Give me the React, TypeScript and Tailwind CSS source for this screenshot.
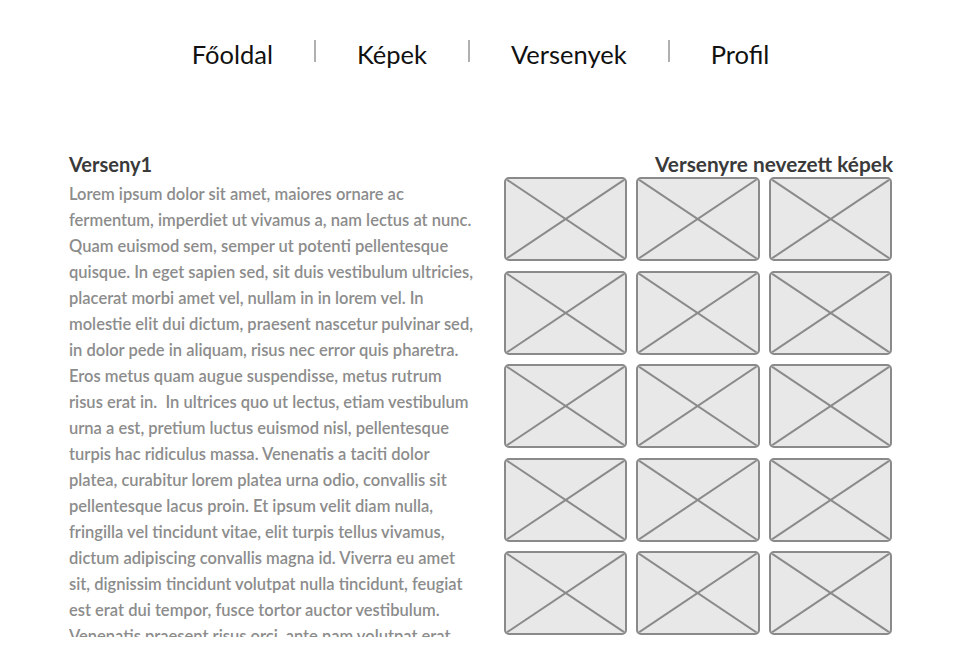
const navItems = ["Főoldal", "Képek", "Versenyek", "Profil"];

const lines = [
  "Lorem ipsum dolor sit amet, maiores ornare ac",
  "fermentum, imperdiet ut vivamus a, nam lectus at nunc.",
  "Quam euismod sem, semper ut potenti pellentesque",
  "quisque. In eget sapien sed, sit duis vestibulum ultricies,",
  "placerat morbi amet vel, nullam in in lorem vel. In",
  "molestie elit dui dictum, praesent nascetur pulvinar sed,",
  "in dolor pede in aliquam, risus nec error quis pharetra.",
  "Eros metus quam augue suspendisse, metus rutrum",
  "risus erat in.\u00a0 In ultrices quo ut lectus, etiam vestibulum",
  "urna a est, pretium luctus euismod nisl, pellentesque",
  "turpis hac ridiculus massa. Venenatis a taciti dolor",
  "platea, curabitur lorem platea urna odio, convallis sit",
  "pellentesque lacus proin. Et ipsum velit diam nulla,",
  "fringilla vel tincidunt vitae, elit turpis tellus vivamus,",
  "dictum adipiscing convallis magna id. Viverra eu amet",
  "sit, dignissim tincidunt volutpat nulla tincidunt, feugiat",
  "est erat dui tempor, fusce tortor auctor vestibulum.",
  "Venenatis praesent risus orci, ante nam volutpat erat",
];

// wireframe image placeholder
const Placeholder = () => (
  <div className="h-[84px] rounded-[5px] border-2 border-[#8a8a8a] bg-[#e8e8e8] overflow-hidden">
    <svg className="w-full h-full block" viewBox="0 0 100 100" preserveAspectRatio="none">
      <line x1="0" y1="0" x2="100" y2="100" stroke="#8a8a8a" strokeWidth="2" vectorEffect="non-scaling-stroke" />
      <line x1="100" y1="0" x2="0" y2="100" stroke="#8a8a8a" strokeWidth="2" vectorEffect="non-scaling-stroke" />
    </svg>
  </div>
);

export default function App() {
  return (
    <div className="w-[960px] h-[657px] bg-white overflow-hidden font-['Lato',sans-serif]">
      <nav className="flex justify-center items-center pt-[40px] pl-[1px]">
        {navItems.map((item, i) => (
          <div key={item} className="flex items-center">
            {i > 0 && <div className="w-[2px] h-[22px] bg-[#b0b0b0] self-start" />}
            <span className="px-[41px] text-[25.5px] leading-[30px] text-[#111] -mt-[1px]">{item}</span>
          </div>
        ))}
      </nav>

      <main className="flex pl-[69px] pt-[83px]">
        <section className="w-[410px]">
          <h2 className="text-[20px] leading-[24px] font-bold text-[#3a3a3a]">Verseny1</h2>
          <div className="h-[456px] overflow-hidden mt-[5px] text-[16.5px] leading-[26px] font-semibold text-[#8c8c8c]">
            {lines.map((l) => (
              <div key={l} className="whitespace-nowrap">{l}</div>
            ))}
          </div>
        </section>

        <section className="w-[388px] ml-[25px]">
          <h2 className="text-right text-[20.8px] leading-[24px] font-bold text-[#3a3a3a] -mr-[1px]">
            Versenyre nevezett képek
          </h2>
          <div className="grid grid-cols-3 gap-x-[9px] gap-y-[9.5px] mt-[1px]">
            {Array.from({ length: 15 }).map((_, i) => (
              <Placeholder key={i} />
            ))}
          </div>
        </section>
      </main>
    </div>
  );
}
